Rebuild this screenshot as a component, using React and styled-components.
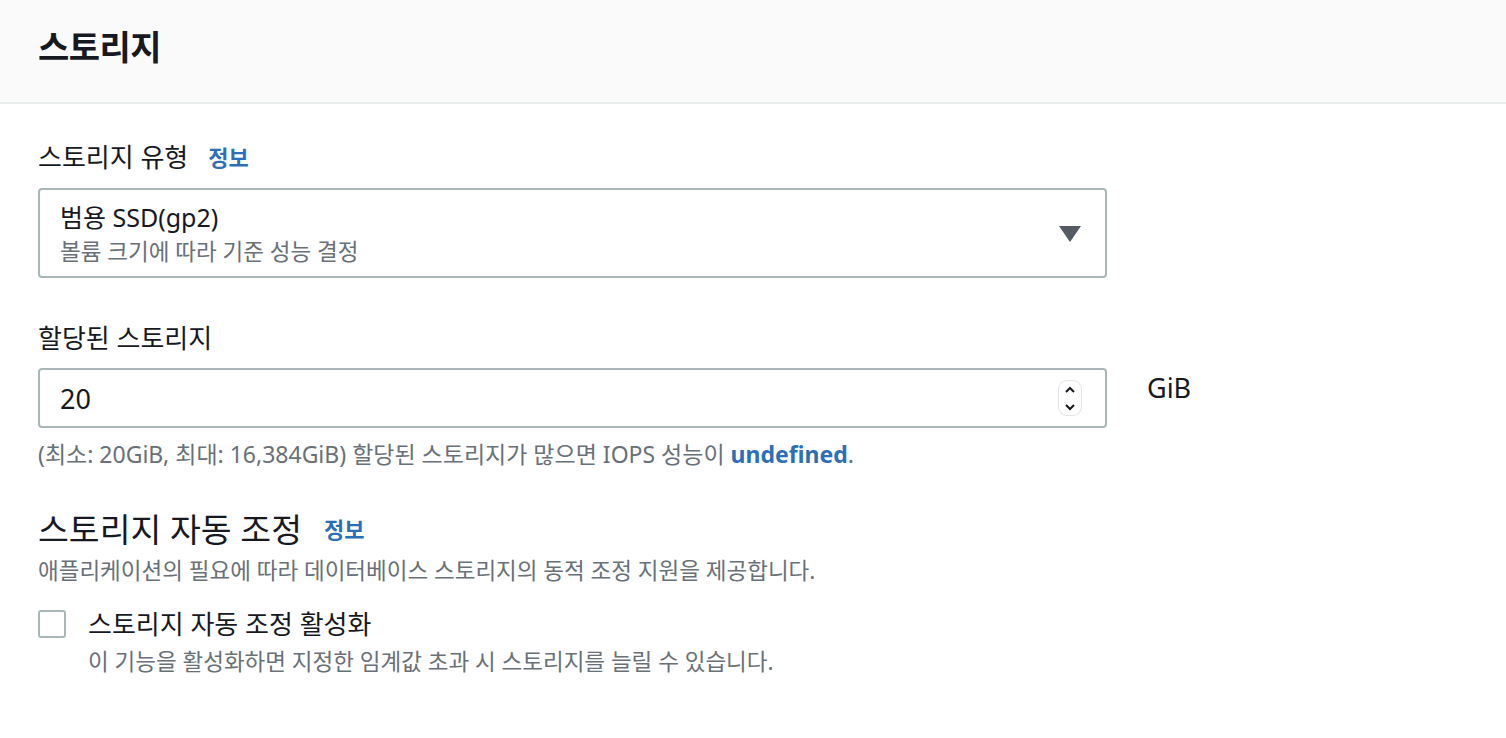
import React from "react";
import styled, { createGlobalStyle } from "styled-components";

const Global = createGlobalStyle`
  body {
    margin: 0;
    background: #fff;
    font-family: "Noto Sans", "Noto Sans CJK KR", sans-serif;
    color: #16191f;
  }
`;

const Panel = styled.section`
  width: 1506px;
  min-height: 738px;
`;

const Header = styled.header`
  height: 104px;
  background: #fafafa;
  border-bottom: 2px solid #eaeded;
  display: flex;
  align-items: center;
  padding: 0 0 12px 38px;
  box-sizing: border-box;

  h2 {
    margin: 0;
    font-size: 34px;
    font-weight: 700;
    letter-spacing: -0.5px;
  }
`;

const Body = styled.div`
  padding: 36px 38px 0;
  display: flex;
  flex-direction: column;
`;

const Field = styled.div`
  display: flex;
  flex-direction: column;
  margin-bottom: ${(p) => p.$gap || 0}px;
`;

const Label = styled.div`
  font-size: 26px;
  line-height: 34px;
  display: flex;
  align-items: center;
  gap: 20px;
  margin-bottom: ${(p) => p.$below ?? 14}px;
`;

const Info = styled.a`
  font-size: 22px;
  font-weight: 700;
  color: #2d6fb7;
  text-decoration: none;
`;

const SelectBox = styled.div`
  width: 1069px;
  height: 90px;
  box-sizing: border-box;
  border: 2px solid #aab7b8;
  border-radius: 4px;
  display: flex;
  align-items: center;
  justify-content: space-between;
  padding: 2px 24px 0 20px;
`;

const SelectText = styled.div`
  display: flex;
  flex-direction: column;

  strong {
    font-weight: 400;
    font-size: 25px;
    line-height: 36px;
  }
  span {
    font-size: 22.5px;
    line-height: 34px;
    color: #687078;
  }
`;

const Caret = styled.div`
  width: 0;
  height: 0;
  border-left: 11px solid transparent;
  border-right: 11px solid transparent;
  border-top: 16px solid #545b64;
`;

const InputRow = styled.div`
  display: flex;
  align-items: flex-start;
  gap: 40px;
`;

const NumberBox = styled.div`
  width: 1069px;
  height: 60px;
  box-sizing: border-box;
  border: 2px solid #aab7b8;
  border-radius: 4px;
  display: flex;
  align-items: center;
  justify-content: space-between;
  padding: 0 24px 0 20px;
  font-size: 27px;
`;

const Spinner = styled.div`
  width: 22px;
  height: 34px;
  border-radius: 8px;
  box-shadow: 0 0 0 1px #e2e4e6;
  display: flex;
  flex-direction: column;
  align-items: center;
  justify-content: space-around;
  svg {
    display: block;
  }
`;

const Unit = styled.div`
  font-size: 27px;
  line-height: 40px;
`;

const Hint = styled.div`
  font-size: 23px;
  color: #687078;
  margin-top: 11px;
  line-height: 30px;

  b {
    color: #2d6fb7;
  }
`;

const SectionTitle = styled.div`
  font-size: 33.5px;
  line-height: 44px;
  display: flex;
  align-items: center;
  gap: 22px;
`;

const Desc = styled.div`
  font-size: 22.5px;
  line-height: 30px;
  color: #687078;
  margin-top: ${(p) => p.$top || 0}px;
  margin-left: ${(p) => p.$indent || 0}px;
`;

const CheckRow = styled.label`
  display: flex;
  align-items: center;
  gap: 22px;
  margin-top: 20px;
  font-size: 26px;
  line-height: 36px;
`;

const Box = styled.span`
  width: 28px;
  height: 28px;
  box-sizing: border-box;
  border: 2px solid #aab7b8;
  border-radius: 3px;
`;

export default function App() {
  return (
    <>
      <Global />
      <Panel>
        <Header>
          <h2>스토리지</h2>
        </Header>
        <Body>
          <Field $gap={43}>
            <Label>
              스토리지 유형 <Info>정보</Info>
            </Label>
            <SelectBox>
              <SelectText>
                <strong>범용 SSD(gp2)</strong>
                <span>볼륨 크기에 따라 기준 성능 결정</span>
              </SelectText>
              <Caret />
            </SelectBox>
          </Field>
          <Field $gap={38}>
            <Label $below={13}>할당된 스토리지</Label>
            <InputRow>
              <NumberBox>
                20
                <Spinner>
                  <svg width="12" height="8" viewBox="0 0 12 8">
                    <path d="M2 6l4-4 4 4" fill="none" stroke="#16191f" strokeWidth="2" />
                  </svg>
                  <svg width="12" height="8" viewBox="0 0 12 8">
                    <path d="M2 2l4 4 4-4" fill="none" stroke="#16191f" strokeWidth="2" />
                  </svg>
                </Spinner>
              </NumberBox>
              <Unit>GiB</Unit>
            </InputRow>
            <Hint>
              (최소: 20GiB, 최대: 16,384GiB) 할당된 스토리지가 많으면 IOPS 성능이 <b>undefined</b>.
            </Hint>
          </Field>
          <Field>
            <SectionTitle>
              스토리지 자동 조정 <Info>정보</Info>
            </SectionTitle>
            <Desc $top={5}>애플리케이션의 필요에 따라 데이터베이스 스토리지의 동적 조정 지원을 제공합니다.</Desc>
            <CheckRow>
              <Box />
              스토리지 자동 조정 활성화
            </CheckRow>
            <Desc $top={5} $indent={50}>
              이 기능을 활성화하면 지정한 임계값 초과 시 스토리지를 늘릴 수 있습니다.
            </Desc>
          </Field>
        </Body>
      </Panel>
    </>
  );
}
